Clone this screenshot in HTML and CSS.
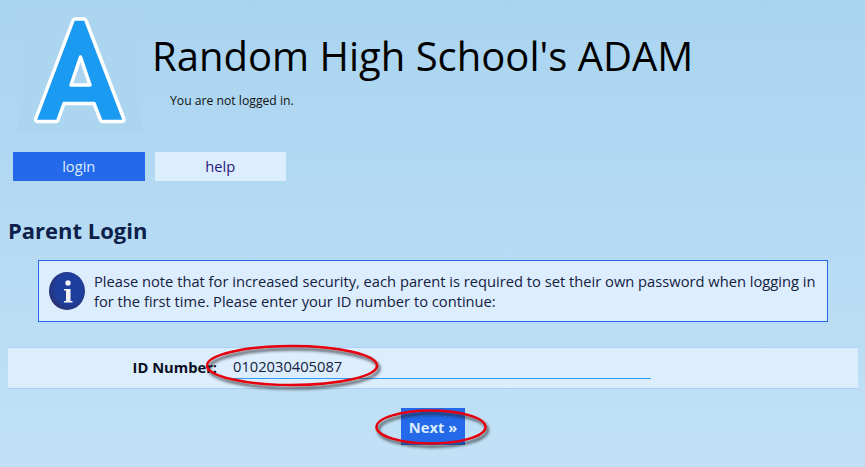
FILE: index.html
```html
<!DOCTYPE html>
<html lang="en">
<head>
<meta charset="utf-8">
<title>Random High School's ADAM</title>
<link rel="stylesheet" href="styles.css">
</head>
<body>
<header class="header">
  <svg class="logo" width="124" height="125" viewBox="0 0 124 125">
    <rect class="logo-bg" width="124" height="125"/>
    <path class="logo-a" d="M57 11 H66 Q67.500 11 68 12.500 L105.500 110 Q107 113.500 103 113.500 H85 Q83 113.500 82.500 112 L76 95.500 H46 L40 112 Q39.500 113.500 38 113.500 H20 Q16.500 113.500 18 110 L55 12.500 Q55.500 11 57 11 Z M62.500 49 L53 77 H72 Z"/>
  </svg>
  <div class="header-text">
    <h1 class="title">Random High School's ADAM</h1>
    <p class="status">You are not logged in.</p>
  </div>
</header>
<nav class="nav">
  <a class="tab tab-active">login</a>
  <a class="tab">help</a>
</nav>
<h2 class="heading">Parent Login</h2>
<div class="notice">
  <svg class="info" width="36" height="38" viewBox="0 0 36 38">
    <defs><radialGradient id="g" cx="55%" cy="45%" r="55%"><stop offset="0.7" stop-color="#1f3f9c"/><stop offset="1" stop-color="#2a3275"/></radialGradient></defs>
    <ellipse cx="18" cy="19" rx="18" ry="19" fill="url(#g)"/>
    <circle cx="19" cy="11" r="2.700" fill="#f2f4f8"/>
    <path d="M15 17 H21.500 V29 H23.500 V30.500 H15 V29 H17 V18.500 H15 Z" fill="#f2f4f8"/>
  </svg>
  <p class="notice-text">Please note that for increased security, each parent is required to set their own password when logging in for the first time. Please enter your ID number to continue:</p>
</div>
<form class="row">
  <label class="label">ID Number:</label>
  <span class="input">0102030405087</span>
</form>
<div class="actions"><button class="next" type="button">Next »</button></div>
<svg class="marks" width="865" height="467" viewBox="0 0 865 467">
  <defs><filter id="s" x="-10%" y="-30%" width="120%" height="170%"><feDropShadow dx="2" dy="3" stdDeviation="1.500" flood-color="#222" flood-opacity=".8"/></filter></defs>
  <ellipse class="mark" cx="292" cy="365.500" rx="85" ry="19.500"/>
  <ellipse class="mark" cx="431" cy="427" rx="54.500" ry="16.500"/>
</svg>
</body>
</html>
```
FILE: styles.css
```css
html, body { height: 100%; }
body {
  margin: 0;
  height: 467px;
  overflow: hidden;
  position: relative;
  box-sizing: border-box;
  padding: 8px 7px 0 8px;
  background: linear-gradient(#a9d4f0, #c2e1f6);
  font-family: "Open Sans", sans-serif;
  color: #0d1a3a;
}
.header { display: flex; height: 125px; padding-left: 10px; }
.logo { display: block; flex: none; }
.logo-bg { fill: #acd5ef; }
.logo-a { fill: #1b9af2; fill-rule: evenodd; stroke: #fff; stroke-width: 3.500; stroke-linejoin: round; }
.header-text { margin-left: 10px; }
.title { margin: 22px 0 0; font-size: 40px; line-height: 52px; font-weight: 400; color: #000; white-space: nowrap; }
.status { margin: 11px 0 0 18px; font-size: 12.200px; line-height: 15px; color: #111; }
.nav { display: flex; gap: 10px; margin: 19px 0 0 5px; }
.tab { width: 131.500px; height: 29px; line-height: 29px; text-align: center; font-size: 14.700px; background: #dcedfe; color: #2a1a80; }
.tab-active { background: #2369ea; color: #dcedfe; }
.heading { margin: 34px 0 0; font-size: 22px; line-height: 30px; font-weight: 700; color: #0d1f4a; }
.notice {
  display: flex; align-items: center; gap: 9px;
  width: 790px; height: 62px; box-sizing: border-box;
  margin: 15px 0 0 30px; padding: 0 10px;
  background: #dcedfe; border: 1px solid #2369ea;
}
.info { flex: none; }
.notice-text { margin: 0; font-size: 14.700px; line-height: 20px; color: #14213f; }
.row {
  display: flex; align-items: center; gap: 16px;
  width: 850px; height: 42px; box-sizing: border-box;
  margin: 25px 0 0; padding-bottom: 2px;
  background: #dcedfe; border-top: 1px solid #a9d2f7; border-bottom: 1px solid #a9d2f7;
}
.label { width: 209px; text-align: right; font-size: 14.700px; font-weight: 700; color: #0b0f1e; }
.input { width: 418px; height: 24px; line-height: 23px; box-sizing: border-box; border-bottom: 1px solid #2f9bf5; font-size: 14.700px; color: #14213f; }
.actions { display: flex; justify-content: center; margin-top: 19px; }
.next { width: 64px; height: 37px; padding: 0; border: 0; background: #2369ea; color: #dcedfe; font: 700 14.700px "Open Sans", sans-serif; }
.marks { position: absolute; left: 0; top: 0; pointer-events: none; }
.mark { fill: none; stroke: #e6000f; stroke-width: 2.500; filter: url(#s); }
```
